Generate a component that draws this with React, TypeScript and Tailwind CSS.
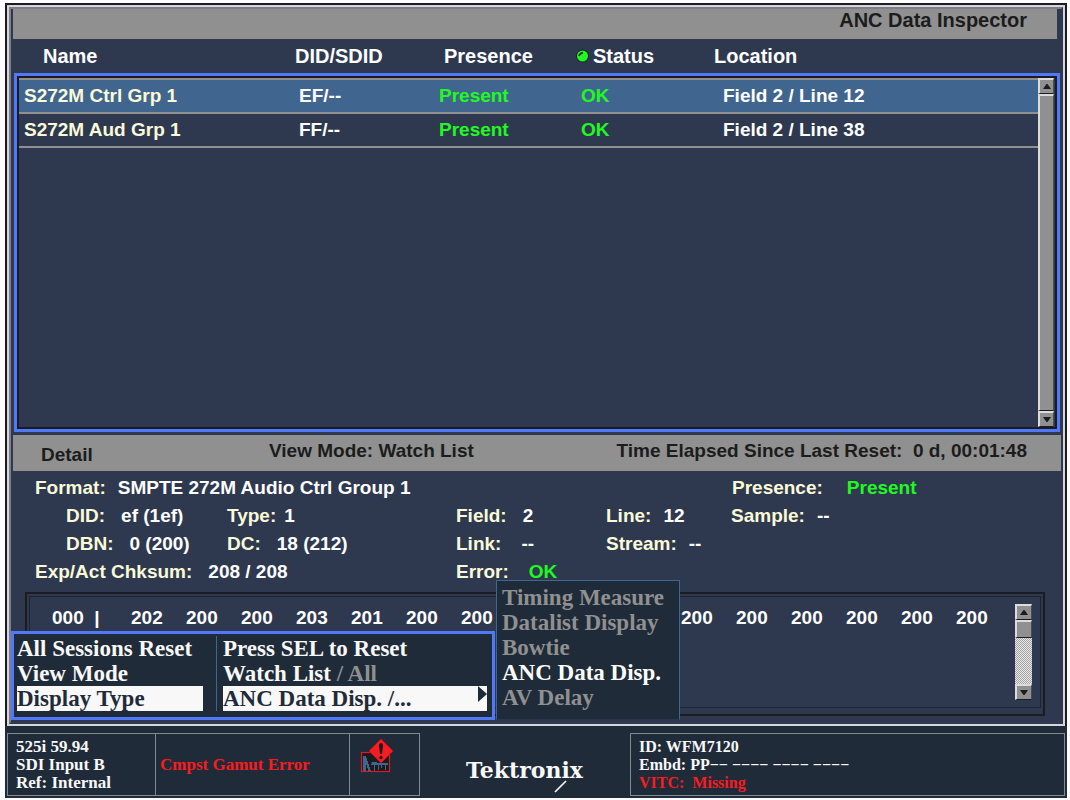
import React from "react";

const sans = "font-['Liberation_Sans',Arial,sans-serif]";
const serif = "font-['Liberation_Serif','Times_New_Roman',serif]";

const packets = [
  { name: "S272M Ctrl Grp 1", did: "EF/--", presence: "Present", status: "OK", location: "Field 2 / Line 12", selected: true },
  { name: "S272M Aud Grp 1", did: "FF/--", presence: "Present", status: "OK", location: "Field 2 / Line 38", selected: false },
];

const leftWords = ["202", "200", "200", "203", "201", "200", "200"];
const rightWords = ["200", "200", "200", "200", "200", "200"];

function ArrowButton({ down, label }: { down?: boolean; label: string }) {
  return (
    <button
      type="button"
      aria-label={label}
      className="flex h-4 w-full shrink-0 items-center justify-center border-t-2 border-r border-b border-l-2 border-t-[#dcdcdc] border-l-[#dcdcdc] border-r-[#4c4c50] border-b-[#1c1c20] bg-[#909090]"
    >
      <svg width="8" height="5" viewBox="0 0 8 5" fill="#1c1c1c" className="shrink-0" aria-hidden="true">
        {down ? <path d="M0 0h8L4.5 5h-1z" /> : <path d="M0 5h8L4.5 0h-1z" />}
      </svg>
    </button>
  );
}

function Field({ label, value, className = "", gap = "gap-3", green }: { label: string; value: string; className?: string; gap?: string; green?: boolean }) {
  return (
    <div className={`flex whitespace-pre ${gap} ${className}`}>
      <dt className="text-[#fafad8]">{label}</dt>
      <dd className={green ? "text-[#20fa20]" : "text-white"}>{value}</dd>
    </div>
  );
}

function PacketList() {
  return (
    <section>
      <table className="w-full table-fixed text-left text-[20px] leading-[34px] text-white">
        <thead>
          <tr>
            <th className="w-[282px] pl-[30px]">Name</th>
            <th className="w-[149px]">DID/SDID</th>
            <th className="w-[132px]">Presence</th>
            <th className="w-[138px]">
              <span className="flex items-center gap-1">
                <svg width="13" height="14" viewBox="0 0 13 14" aria-hidden="true">
                  <circle cx="6.5" cy="7" r="6.4" fill="#18222c" />
                  <circle cx="6.5" cy="7" r="5.5" fill="#20fa20" />
                  <path d="M3 7Q3.6 4.4 7 3.6" stroke="#123018" strokeWidth="1.8" fill="none" />
                </svg>
                Status
              </span>
            </th>
            <th>Location</th>
          </tr>
        </thead>
      </table>
      <div className="mx-px flex h-[359px] border-[3px] border-[#5078f8]">
        <div className="flex grow border-2 border-[#1c1c20] pr-px">
          <div className="grow">
            <table aria-label="ANC packets" className="w-full table-fixed border-t-2 border-[#909090] text-left text-[19px] leading-8 font-bold text-white">
              <tbody>
                {packets.map((p) => (
                  <tr key={p.name} className={p.selected ? "border-b-2 border-[#909090] bg-[#40668f]" : "border-b-2 border-[#909090]"}>
                    <td className="w-[280px] pl-[5px] text-[#fafad8]">{p.name}</td>
                    <td className="w-[140px]">{p.did}</td>
                    <td className="w-[142px] text-[#20fa20]">{p.presence}</td>
                    <td className="w-[142px] text-[#20fa20]">{p.status}</td>
                    <td>{p.location}</td>
                  </tr>
                ))}
              </tbody>
            </table>
          </div>
          <div className="flex w-4 shrink-0 flex-col">
            <ArrowButton label="Scroll list up" />
            <div className="grow border-t-2 border-r border-b border-l-2 border-t-[#dcdcdc] border-l-[#dcdcdc] border-r-[#4c4c50] border-b-[#1c1c20] bg-[#909090]" />
            <ArrowButton down label="Scroll list down" />
          </div>
        </div>
      </div>
    </section>
  );
}

function Detail() {
  return (
    <dl className="px-[22px] pt-[3px] text-[19px] leading-7 font-bold">
      <div className="flex">
        <Field label="Format:" value="SMPTE 272M Audio Ctrl Group 1" className="w-[697px]" />
        <Field label="Presence:" value="Present" gap="gap-6" green />
      </div>
      <div className="flex pl-[31px]">
        <Field label="DID:" value="ef (1ef)" className="w-[161px]" gap="gap-4" />
        <Field label="Type:" value="1" gap="gap-2" className="w-[229px]" />
        <Field label="Field:" value="2" gap="gap-4" className="w-[150px]" />
        <Field label="Line:" value="12" className="w-[125px]" />
        <Field label="Sample:" value="--" />
      </div>
      <div className="flex pl-[31px]">
        <Field label="DBN:" value="0 (200)" className="w-[161px]" gap="gap-4" />
        <Field label="DC:" value="18 (212)" gap="gap-4" className="w-[229px]" />
        <Field label="Link:" value="--" gap="gap-5" className="w-[150px]" />
        <Field label="Stream:" value="--" />
      </div>
      <div className="flex">
        <Field label="Exp/Act Chksum:" value="208 / 208" className="w-[421px]" gap="gap-4" />
        <Field label="Error:" value="OK" gap="gap-5" green />
      </div>
    </dl>
  );
}

function DataWords() {
  return (
    <div className="mx-3 mt-[6px] mr-4 mb-[6px] grow border-2 border-[#1c1c20] p-[2px]">
      <div className="flex h-full justify-between border border-[#1c2430] py-[7px] pr-2 pl-[22px]">
        <div className="flex text-[19px] leading-7 font-bold text-white">
          <span className="w-[79px] shrink-0 whitespace-pre">000  |</span>
          {leftWords.map((w, i) => (
            <span key={i} className="w-[55px] shrink-0">{w}</span>
          ))}
          <div className="flex pl-[165px]">
            {rightWords.map((w, i) => (
              <span key={i} className="w-[55px] shrink-0">{w}</span>
            ))}
          </div>
        </div>
        <div className="flex h-24 w-[17px] shrink-0 flex-col">
          <ArrowButton label="Scroll data up" />
          <div className="h-[18px] border-t-2 border-r border-b border-l-2 border-t-[#dcdcdc] border-l-[#dcdcdc] border-r-[#4c4c50] border-b-[#1c1c20] bg-[#909090]" />
          <div className="grow bg-[#c8c8c8] bg-[conic-gradient(#a4a4a4_25%,#e8e8e8_0_50%,#a4a4a4_0_75%,#e8e8e8_0)] bg-size-[2px_2px]" />
          <ArrowButton down label="Scroll data down" />
        </div>
      </div>
    </div>
  );
}

const item = "w-full text-left whitespace-pre";

function Menus() {
  return (
    <div className={`absolute bottom-[6px] left-[4px] flex items-end text-[23px] leading-[25px] font-bold text-[#f8f8f8] ${serif}`}>
      <div className="flex w-[484px] shrink-0 border-[3px] border-[#5078f8] bg-[#1f2b38] pt-[2px] pr-[5px] pb-[6px] pl-[3px]">
        <div className="w-[200px] shrink-0 border-r border-[#40668f] pr-[13px]">
          <button type="button" className={item}>All Sessions Reset</button>
          <button type="button" className={item}>View Mode</button>
          <button type="button" className={`${item} bg-[#f8f8f8] text-[#1f2b38]`}>Display Type</button>
        </div>
        <div className="min-w-0 grow pl-[6px]">
          <button type="button" className={item}>Press SEL to Reset</button>
          <button type="button" className={item}>Watch List <span className="text-[#909090]">/ All</span></button>
          <button type="button" className={`${item} flex justify-between bg-[#f8f8f8] text-[#1f2b38]`}>
            ANC Data Disp. /...
            <svg width="9" height="16" viewBox="0 0 9 16" aria-hidden="true">
              <path d="M0 0l9 8-9 8z" fill="#1f2b38" />
            </svg>
          </button>
        </div>
      </div>
      <div className="ml-px w-[184px] border border-[#40668f] border-b-[#26394c] bg-[#1f2b38] pt-1 pb-[9px] pl-[5px] text-[#909090]">
        <button type="button" className={item}>Timing Measure</button>
        <button type="button" className={item}>Datalist Display</button>
        <button type="button" className={item}>Bowtie</button>
        <button type="button" className={`${item} text-white`}>ANC Data Disp.</button>
        <button type="button" className={item}>AV Delay</button>
      </div>
    </div>
  );
}

function StatusBar() {
  return (
    <footer className={`flex h-[72px] bg-[#1f2b38] px-[2px] pt-[7px] pb-[2px] text-[17px] leading-[18px] font-bold text-[#f8f8f8] ${serif}`}>
      <div className="w-[149px] border border-[#808890] pt-1 pl-2">
        <p>525i 59.94</p>
        <p>SDI Input B</p>
        <p>Ref: Internal</p>
      </div>
      <div className="w-[194px] border border-l-0 border-[#808890] pt-[22px] pl-1 text-[#f81c20]">Cmpst Gamut Error</div>
      <div className="w-[70px] border border-l-0 border-[#808890] pt-1 pl-[10px]">
        <svg width="34" height="35" viewBox="0 0 34 35" role="img" aria-label="Gamut alarm">
          <rect x="1.5" y="14.5" width="28" height="19" fill="#1c1c20" stroke="#d81c20" strokeWidth="1.2" />
          <path d="M3 18h3v2h1v3h1v3h1v3h1v3h1v1H8v-3H7v-3H6v6H3zM12 24h5v1h11v2h-2v5h-1v-5h-3v3h-1v-3h-2v5h-1v-5h-3v6h-1v-6h-3z" fill="#40668f" />
          <path d="M21 1l12 12-12 12L9 13z" fill="#f81c20" stroke="#b81420" strokeWidth="1" />
          <path d="M19 8q0-3 2-3t2 3l-1 8h-2z" fill="#1c1c20" />
          <circle cx="21" cy="19.5" r="1.7" fill="#1c1c20" />
        </svg>
      </div>
      <div className="flex w-[210px] pt-[23px] pl-[46px]">
        <div className="relative h-8 font-['DejaVu_Serif',serif] text-[22px] leading-7">
          Tektronix
          <svg className="absolute top-[24px] left-[88px]" width="13" height="13" viewBox="0 0 13 13" aria-hidden="true">
            <path d="M1 12L12 1" stroke="#f8f8f8" strokeWidth="1.7" />
          </svg>
        </div>
      </div>
      <div className="grow border border-[#808890] pt-1 pl-2 text-[16px] whitespace-pre">
        <p>ID: WFM7120</p>
        <p>Embd: PP−− −−−− −−−− −−−−</p>
        <p className="text-[#f81c20]">VITC:  Missing</p>
      </div>
    </footer>
  );
}

export default function App() {
  return (
    <div className={`flex min-h-screen flex-col bg-[#fcfcfe] pt-[3px] pr-[3px] pb-[2px] pl-[5px] ${sans}`}>
      <main className="relative flex grow flex-col border-2 border-b-0 border-[#1c1c20] bg-[#2e3950]">
        <div className="flex grow flex-col border-2 border-[#d8d4dc]">
          <div className="flex grow flex-col border-2 border-[#7c7e8a] border-r-[#2e3950] border-b-[#2e3950] pl-[2px]">
            <header className="mr-1 bg-[#909090] pr-[30px] text-right text-[20px] leading-[22px] font-bold text-[#1c1c1c]">
              <h1 className="pb-2">ANC Data Inspector</h1>
            </header>
            <PacketList />
            <div className="mt-[3px] flex h-9 items-start bg-[#909090] pt-1 pr-[34px] pl-7 text-[19px] leading-6 font-bold text-[#1c1c1c]">
              <h2 className="w-[228px] pt-1">Detail</h2>
              <p className="grow">View Mode: Watch List</p>
              <p className="whitespace-pre">Time Elapsed Since Last Reset:  0 d, 00:01:48</p>
            </div>
            <Detail />
            <DataWords />
          </div>
        </div>
        <Menus />
      </main>
      <StatusBar />
    </div>
  );
}
